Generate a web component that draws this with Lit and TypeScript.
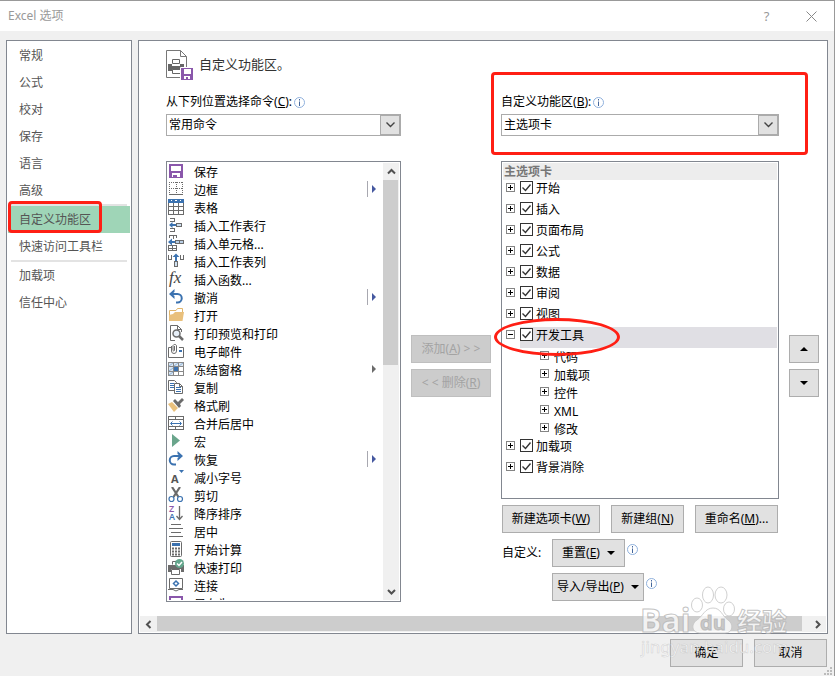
import { LitElement, html, css, svg, nothing } from "lit";
import { customElement, property } from "lit/decorators.js";

const G = "#6b6b6b";
const B = "#3b72b0";
const P = "#8a57ab";

const floppy = svg`<g shape-rendering="crispEdges"><path fill="${P}" fill-rule="evenodd" d="M1 1h14v14H1zM3 3v5h10V3zM4 10v4h1v-2h4v2h3v-4z"/></g>`;

const glyphs: Record<string, unknown> = {
  save: floppy,
  border: svg`<g fill="none" stroke="${G}" shape-rendering="crispEdges"><path stroke-dasharray="1 1" d="M1 1.5h14M1 7.5h14M1.5 1v12M8.5 1v12M14.5 1v12"/><path d="M1 13.5h14"/></g>`,
  table: svg`<g shape-rendering="crispEdges"><path fill="${B}" d="M0 0h16v4H0z"/><path fill="#fff" d="M3 1h1v1h-1zM7 1h2v1h-2zM12 1h1v1h-1z"/><path fill="none" stroke="${G}" d="M.5 4v11.500h15V4M0 7.500h16M0 11.500h16M5.500 4v12M10.500 4v12"/></g>`,
  insRow: svg`<g shape-rendering="crispEdges"><path fill="none" stroke="${G}" d="M2 1.500h4.500v3H2M2 11.500h4.500v3H2"/><path fill="#cfe0f0" stroke="${G}" d="M8.500 6.500h5v3h-5z"/></g><path fill="${B}" d="M1 8l3.500-3v2H8v2H4.500v2z"/>`,
  insCell: svg`<g shape-rendering="crispEdges"><path fill="none" stroke="${G}" d="M1.500 3V.5h7V3M5 .5v3M.5 10.500h8v5h-8zM4.500 10.500v5M.5 13h8"/><path fill="#b9cfe6" stroke="${G}" d="M7.500 5.500h8v3h-8zM11.500 5.500v3"/></g><path fill="${B}" d="M0 7l4-3.500V6h3v2H4v2.500z"/>`,
  insCol: svg`<g shape-rendering="crispEdges"><path fill="none" stroke="${G}" d="M.5 2v4.500h3V2M12.500 2v4.500h3V2"/><path fill="#cfe0f0" stroke="${G}" d="M6.500 8.500h3v5h-3z"/></g><path fill="${B}" d="M8 .5l3.500 3.500H9v4H7V4H4.500z"/>`,
  fx: svg`<text x="1" y="12" font-family="Liberation Serif, serif" font-style="italic" font-size="17" fill="#444">fx</text>`,
  undo: svg`<path fill="none" stroke="${B}" stroke-width="2" d="M3 5h6.500a4 4 0 0 1 0 8.500H8"/><path fill="${B}" d="M6.500 0L1 5l5.500 5V7L4 5l2.500-2z"/>`,
  open: svg`<path fill="#fff" stroke="#e0b56b" d="M1.500 13V3.500H8L9.500 1.500h5V6"/><path fill="#e9c07c" d="M1 14V8l4-1 2-2h9l-1.500 9z"/>`,
  preview: svg`<path fill="none" stroke="${G}" stroke-width="1" d="M7 15.500H2.500V.5h7l4 4V7M9.500 .5v4h4"/><circle cx="8.500" cy="8.500" r="3.500" fill="#e6eef7" stroke="${G}" stroke-width="1.500"/><path stroke="${G}" stroke-width="2.500" d="M11 11l4 4"/>`,
  mail: svg`<path fill="none" stroke="${G}" d="M3 4.500H.5v10h15v-10H11"/><path fill="none" stroke="${G}" d="M3.500 3v5a2.500 2.500 0 0 0 5 0V2.500a2 2 0 0 0-3.500 0V7.500a1 1 0 0 0 1.500 0V3"/><path fill="${B}" d="M11 7h3v2h-3z"/>`,
  freeze: svg`<g shape-rendering="crispEdges"><path fill="#dbe7f3" d="M0 1h16v5H0zM0 6h5v9H0z"/><path fill="none" stroke="#888" d="M.5 1.500h15v13H.5zM0 5.500h16M0 10.500h16M5.500 1v14M10.500 1v14"/><path fill="${B}" d="M6 6h4v4H6z"/></g><path stroke="#8fb2d6" d="M1 5l4-3M6 5l4-3M11 5l4-3M1 10l4-3M1 14l4-3"/>`,
  copy: svg`<path fill="#fff" stroke="${G}" d="M.5 1.500h6l2 2v8h-8z"/><path stroke="${B}" d="M2 4.500h4M2 6.500h4M2 8.500h4"/><path fill="#fff" stroke="${G}" d="M6.500 4.500h5l3 3v7h-8zM11.500 4.500v3h3"/><path stroke="${B}" d="M8 8.500h5M8 10.500h5M8 12.500h5"/>`,
  brush: svg`<path fill="#e9c07c" d="M0 7l4-2 6 6-4 4z"/><path fill="${G}" d="M5 4l2-2 3 3 4-4 2 2-4 4 1 2-2 2z"/>`,
  merge: svg`<g fill="none" shape-rendering="crispEdges"><path stroke="${G}" d="M.5 1.500h15v13H.5zM0 4.500h16M0 11.500h16M7.500 1v3M7.500 12v3"/><path stroke="${B}" d="M3 8.500h10"/></g><path fill="none" stroke="${B}" d="M4.500 6.500L2.500 8.500 4.500 10.500M11.500 6.500L13.500 8.500 11.500 10.500"/>`,
  macro: svg`<path fill="#6aa58c" d="M4 1l8 6.500L4 14z"/>`,
  redo: svg`<path fill="none" stroke="${B}" stroke-width="2" d="M13 5H6a4 4 0 0 0 0 8.500h2"/><path fill="${B}" d="M9.500 0L15 5l-5.500 5V7L12 5 9.500 3z"/>`,
  shrink: svg`<text x="3" y="14" font-family="Open Sans, sans-serif" font-weight="700" font-size="11" fill="#555">A</text><path fill="${B}" d="M11 1h5L13.500 4z"/>`,
  cut: svg`<path stroke="${G}" stroke-width="2.200" d="M4 0l6.500 10M12 0L5.500 10"/><circle cx="3.500" cy="12" r="2.500" fill="#fff" stroke="${B}" stroke-width="1.200"/><circle cx="12" cy="12" r="2.500" fill="#fff" stroke="${B}" stroke-width="1.200"/>`,
  sort: svg`<g font-family="Open Sans, sans-serif" font-size="9" font-weight="600"><text x="1" y="7" fill="${P}">Z</text><text x="1" y="15" fill="${B}">A</text></g><path fill="none" stroke="${G}" stroke-width="1.300" d="M11.500 1v13M8.500 11l3 3.500 3-3.500"/>`,
  center: svg`<path stroke="${G}" shape-rendering="crispEdges" d="M3 1.500h10M1 5.500h14M3 9.500h10M1 13.500h14"/>`,
  calc: svg`<rect x="2.500" y=".5" width="11" height="15" rx="1" fill="#fff" stroke="${G}"/><path fill="${B}" d="M4 2h8v3H4z"/><path stroke="${G}" stroke-width="2" stroke-dasharray="2 1" d="M4 7.500h8M4 10.500h8M4 13.500h8"/>`,
  print: svg`<path fill="${G}" d="M0 6h16v7h-3v-3H3v3H0z"/><path fill="#fff" stroke="${G}" d="M3.500 10.500h8v5h-8zM4.500 5.500v-3H9"/><circle cx="11.500" cy="4.500" r="4.500" fill="#62a68c"/><path fill="none" stroke="#fff" stroke-width="1.500" d="M9 4.500l2 2 3-3.500"/>`,
  link: svg`<path fill="#fff" stroke="${G}" d="M1.500 1.500h13v10h-13z"/><path fill="none" stroke="${G}" d="M0 12.500h5q3 3 6 0h4"/><path fill="none" stroke="${B}" stroke-width="1.500" d="M8 4l2.500 2.500L8 9 5.500 6.500z"/>`,
  close: floppy,
};

const commands: { icon: string; text: string; more?: "split" | "menu" }[] = [
  { icon: "save", text: "保存" },
  { icon: "border", text: "边框", more: "split" },
  { icon: "table", text: "表格" },
  { icon: "insRow", text: "插入工作表行" },
  { icon: "insCell", text: "插入单元格..." },
  { icon: "insCol", text: "插入工作表列" },
  { icon: "fx", text: "插入函数..." },
  { icon: "undo", text: "撤消", more: "split" },
  { icon: "open", text: "打开" },
  { icon: "preview", text: "打印预览和打印" },
  { icon: "mail", text: "电子邮件" },
  { icon: "freeze", text: "冻结窗格", more: "menu" },
  { icon: "copy", text: "复制" },
  { icon: "brush", text: "格式刷" },
  { icon: "merge", text: "合并后居中" },
  { icon: "macro", text: "宏" },
  { icon: "redo", text: "恢复", more: "split" },
  { icon: "shrink", text: "减小字号" },
  { icon: "cut", text: "剪切" },
  { icon: "sort", text: "降序排序" },
  { icon: "center", text: "居中" },
  { icon: "calc", text: "开始计算" },
  { icon: "print", text: "快速打印" },
  { icon: "link", text: "连接" },
  { icon: "close", text: "另存为" },
];

const tabs: { text: string; children?: string[] }[] = [
  { text: "开始" },
  { text: "插入" },
  { text: "页面布局" },
  { text: "公式" },
  { text: "数据" },
  { text: "审阅" },
  { text: "视图" },
  { text: "开发工具", children: ["代码", "加载项", "控件", "XML", "修改"] },
  { text: "加载项" },
  { text: "背景消除" },
];

const navGroups = [
  ["常规", "公式", "校对", "保存", "语言", "高级"],
  ["自定义功能区", "快速访问工具栏"],
  ["加载项", "信任中心"],
];
const currentPage = "自定义功能区";

const base = css`
  * {
    box-sizing: border-box;
  }
  button,
  select,
  input {
    font: inherit;
    color: inherit;
    margin: 0;
    padding: 0;
    border: 0;
    border-radius: 0;
    background: none;
  }
  ul {
    list-style: none;
    margin: 0;
    padding: 0;
  }
  svg {
    display: block;
    flex: none;
  }
`;

const infoIcon = html`<svg class="info" width="11" height="11" viewBox="0 0 11 11" aria-hidden="true">
  <circle cx="5.500" cy="5.500" r="5" fill="#fff" stroke="#8fb0dc" />
  <path fill="#44679c" d="M5 2h1v1.500H5zM5 4.500h1V9H5z" />
</svg>`;

const chevron = (d: string) => html`<svg width="9" height="9" viewBox="0 0 9 9" aria-hidden="true">
  <path fill="none" stroke="#505050" stroke-width="2" d=${d} />
</svg>`;

@customElement("combo-field")
class ComboField extends LitElement {
  @property() label = "";
  @property() key = "";
  @property() value = "";

  static styles = [
    base,
    css`
      :host {
        display: block;
      }
      .label {
        display: flex;
        align-items: center;
        gap: 2px;
        height: 16px;
        margin-bottom: 4px;
        white-space: nowrap;
      }
      .combo {
        display: grid;
        grid-template-columns: minmax(0, 1fr) 20px;
        height: 22px;
        border: 1px solid #ababab;
        background: #fff;
      }
      .select {
        grid-area: 1 / 1 / 2 / 3;
        appearance: none;
        padding-left: 2px;
      }
      .drop {
        grid-area: 1 / 2;
        display: grid;
        place-items: center;
        border: 1px solid #ababab;
        background: #e1e1e1;
        pointer-events: none;
      }
    `,
  ];

  render() {
    return html`
      <div class="label">
        <label for="s">${this.label}(<u>${this.key}</u>):</label>${infoIcon}
      </div>
      <div class="combo">
        <select class="select" id="s">
          <option>${this.value}</option>
        </select>
        <span class="drop">
          <svg width="9" height="6" viewBox="0 0 9 6" aria-hidden="true">
            <path fill="none" stroke="#444" stroke-width="1.400" d="M.5 .5l4 4 4-4" />
          </svg>
        </span>
      </div>
    `;
  }
}

@customElement("command-list")
class CommandList extends LitElement {
  static styles = [
    base,
    css`
      :host {
        display: flex;
        min-height: 0;
        padding: 1px;
        border: 1px solid #828790;
        background: #fff;
      }
      .items {
        flex: 1;
        min-width: 0;
        overflow: hidden;
      }
      .item {
        display: flex;
        height: 18px;
        line-height: 20px;
        white-space: nowrap;
      }
      .text {
        flex: 1;
        padding-left: 10px;
      }
      .more {
        display: flex;
        align-items: center;
        gap: 4px;
        width: 16px;
        height: 16px;
      }
      .rule {
        width: 1px;
        height: 16px;
        background: #a8a8b0;
      }
      .menu {
        justify-content: flex-end;
        padding-right: 7px;
      }
      .bar {
        display: flex;
        flex-direction: column;
        width: 16px;
        background: #f0f0f0;
      }
      .arrow {
        display: grid;
        place-items: center;
        height: 17px;
      }
      .track {
        flex: 1;
      }
      .thumb {
        height: 46%;
        width: 15px;
        background: #cdcdcd;
      }
    `,
  ];

  render() {
    return html`
      <ul class="items">
        ${commands.map(
          (c) => html`<li class="item">
            <svg width="16" height="16" viewBox="0 0 16 16" aria-hidden="true">${glyphs[c.icon]}</svg>
            <span class="text">${c.text}</span>
            ${c.more
              ? html`<span class="more ${c.more}">
                  ${c.more === "split" ? html`<span class="rule"></span>` : nothing}
                  <svg width="4" height="8" viewBox="0 0 4 8" aria-hidden="true">
                    <path fill=${c.more === "split" ? "#4659a0" : "#6b6b6b"} d="M0 0l4 4-4 4z" />
                  </svg>
                </span>`
              : nothing}
          </li>`
        )}
      </ul>
      <div class="bar">
        <span class="arrow">${chevron("M1 6.500L4.500 3 8 6.500")}</span>
        <div class="track"><div class="thumb"></div></div>
        <span class="arrow">${chevron("M1 3l3.500 3.500L8 3")}</span>
      </div>
    `;
  }
}

@customElement("tab-tree")
class TabTree extends LitElement {
  static styles = [
    base,
    css`
      :host {
        display: block;
        padding: 1px;
        border: 1px solid #828790;
        background: #fff;
      }
      .head {
        height: 17px;
        padding-left: 1px;
        background: #ededed;
        color: #777;
        font-weight: 700;
        line-height: 17px;
      }
      .row {
        position: relative;
        display: flex;
        height: 21px;
        padding-left: 3px;
      }
      .expander {
        width: 9px;
        height: 9px;
        margin: 3px 5px 0 0;
      }
      .tab {
        flex: 1;
        display: flex;
        padding-top: 1px;
        line-height: 16px;
      }
      .current {
        background: #e0dfe4;
      }
      .check {
        display: grid;
        width: 13px;
        height: 13px;
        margin-right: 3px;
      }
      .box {
        grid-area: 1 / 1;
        appearance: none;
        width: 13px;
        height: 13px;
        border: 1px solid #333;
        background: #fff;
      }
      .tick {
        grid-area: 1 / 1;
        pointer-events: none;
      }
      .child {
        display: flex;
        height: 18px;
        padding-left: 37px;
        line-height: 20px;
      }
      .ring {
        position: absolute;
        left: -9px;
        top: -9px;
        width: 126px;
        height: 38px;
        border: 3px solid #ff1f14;
        border-radius: 50%;
        z-index: 1;
        pointer-events: none;
      }
    `,
  ];

  private expander(open: boolean) {
    return html`<svg class="expander" width="9" height="9" viewBox="0 0 9 9" shape-rendering="crispEdges" aria-hidden="true">
      <path fill="#fff" stroke="#848484" d="M.5 .5h8v8h-8z" />
      <path stroke="#000" d=${open ? "M2 4.500h5" : "M2 4.500h5M4.500 2v5"} />
    </svg>`;
  }

  render() {
    return html`
      <div class="head">主选项卡</div>
      ${tabs.map(
        (t) => html`
          <div class="row">
            ${this.expander(!!t.children)}
            <label class="tab ${t.children ? "current" : ""}">
              <span class="check">
                <input class="box" type="checkbox" checked />
                <svg class="tick" width="13" height="13" viewBox="0 0 13 13" aria-hidden="true">
                  <path fill="none" stroke="#333" stroke-width="1.400" d="M2.500 6.500l3 3 5-6" />
                </svg>
              </span>
              ${t.text}
            </label>
            ${t.children ? html`<span class="ring"></span>` : nothing}
          </div>
          ${t.children?.map((c) => html`<div class="child">${this.expander(false)}${c}</div>`)}
        `
      )}
    `;
  }
}

@customElement("app-root")
class AppRoot extends LitElement {
  static styles = [
    base,
    css`
      :host {
        position: relative;
        display: flex;
        flex-direction: column;
        box-sizing: border-box;
        height: 100vh;
        min-height: 640px;
        overflow: hidden;
        border: 0 solid #999;
        border-width: 1px 1px 0 0;
        background: #f0f0f0;
        color: #000;
        font: 12px/16px "Noto Sans", "Noto Sans CJK SC", sans-serif;
      }
      .title {
        display: flex;
        align-items: center;
        height: 30px;
        padding: 0 17px 0 8px;
        background: #fff;
        color: #999;
      }
      .caption {
        flex: 1;
      }
      .tool {
        display: grid;
        place-items: center;
        width: 11px;
        height: 16px;
        margin-left: 34px;
      }
      .help {
        font-size: 13px;
      }
      .body {
        flex: 1;
        display: flex;
        gap: 6px;
        min-height: 0;
        padding: 9px 6px 0;
      }
      .nav {
        flex: none;
        width: 126px;
        padding: 1px;
        border: 1px solid #828790;
        background: #fff;
      }
      .split {
        height: 2px;
        margin: 0 3px;
        border: 0;
        background: #e3e3e3;
      }
      .link {
        position: relative;
        display: block;
        width: 100%;
        height: 27px;
        padding-left: 11px;
        color: #555;
        text-align: left;
      }
      .active {
        background: #9fd5b7;
      }
      .mark {
        position: absolute;
        border: 3px solid #ff1f14;
        border-radius: 4px;
        pointer-events: none;
      }
      .mark-nav {
        left: 0;
        top: -5px;
        width: 94px;
        height: 32px;
      }
      .mark-field {
        left: -10px;
        right: -29px;
        top: -22px;
        height: 83px;
      }
      .page {
        flex: 1;
        min-width: 0;
        display: flex;
        flex-direction: column;
        padding: 0 1px 1px;
        border: 1px solid #828790;
        background: #fff;
      }
      .heading {
        display: flex;
        gap: 6px;
        height: 30px;
        margin: 9px 26px 14px;
        color: #333;
        font-size: 13px;
        font-weight: 400;
        line-height: 28px;
      }
      .grid {
        flex: 1;
        min-height: 0;
        display: grid;
        grid-template-columns: minmax(0, 235fr) 80px minmax(0, 278fr) 30px;
        grid-template-rows: auto minmax(0, 1fr);
        gap: 25px 10px;
        padding: 0 7px 14px 26px;
      }
      .left {
        grid-area: 1 / 1;
      }
      .right {
        position: relative;
        grid-area: 1 / 3;
      }
      .commands {
        grid-area: 2 / 1;
      }
      .stack {
        grid-row: 2;
        display: flex;
        flex-direction: column;
        justify-content: center;
        gap: 6px;
        padding-bottom: 31px;
      }
      .custom {
        grid-area: 2 / 3;
        display: flex;
        flex-direction: column;
        gap: 6px;
        padding-bottom: 1px;
      }
      .tree {
        flex: 1;
      }
      .line {
        display: flex;
        justify-content: space-between;
        padding: 0 1px;
      }
      .reset {
        display: grid;
        grid-template-columns: 50px auto;
        justify-content: start;
        gap: 6px 0;
        padding-left: 1px;
        align-items: center;
      }
      .with-info {
        grid-column: 2;
        display: flex;
        gap: 2px;
      }
      .with-info .info {
        margin-top: 5px;
      }
      .btn {
        display: flex;
        align-items: center;
        justify-content: center;
        gap: 7px;
        height: 28px;
        border: 1px solid #adadad;
        background: #e1e1e1;
        white-space: nowrap;
      }
      .btn:disabled {
        border-color: #bfbfbf;
        background: #ccc;
        color: #a3a3a3;
      }
      .w73 {
        width: 73px;
      }
      .w83 {
        width: 83px;
      }
      .w92 {
        width: 92px;
      }
      .w98 {
        width: 98px;
      }
      .hbar {
        display: flex;
        height: 16px;
        background: #f0f0f0;
      }
      .harrow {
        display: grid;
        place-items: center;
        width: 17px;
      }
      .htrack {
        flex: 1;
      }
      .hthumb {
        width: 99%;
        height: 15px;
        background: #cdcdcd;
      }
      .foot {
        display: flex;
        justify-content: flex-end;
        gap: 11px;
        padding: 5px 7px 9px;
      }
      .grip {
        position: absolute;
        right: 1px;
        bottom: 0;
      }
      .watermark {
        position: absolute;
        right: 38px;
        bottom: 16px;
        pointer-events: none;
      }
    `,
  ];

  render() {
    return html`
      <header class="title">
        <span class="caption">Excel 选项</span>
        <button class="tool help" aria-label="帮助">?</button>
        <button class="tool" aria-label="关闭">
          <svg width="11" height="11" viewBox="0 0 11 11"><path stroke="#888" d="M.5 .5l10 10M10.500 .5l-10 10" /></svg>
        </button>
      </header>
      <div class="body">
        <nav class="nav">
          ${navGroups.map(
            (g, i) => html`
              ${i ? html`<hr class="split" />` : nothing}
              ${g.map(
                (n) => html`<button class="link ${n === currentPage ? "active" : ""}">
                  ${n}${n === currentPage ? html`<span class="mark mark-nav"></span>` : nothing}
                </button>`
              )}
            `
          )}
        </nav>
        <main class="page">
          <h1 class="heading">
            <svg width="27" height="30" viewBox="0 0 27 30" aria-hidden="true">
              <path fill="#fff" stroke="#777" d="M.5 .5h14l6 6v21H.5zM14.500 .5v6h6" />
              <path fill="#666" d="M2 14h4v2h8v-2h4v7H2z" />
              <path fill="#fff" stroke="#666" d="M6.500 9.500h7v4h-7zM6.500 19.500h8v4h-8z" />
              <path fill="#8a57ab" stroke="#fff" d="M14.500 17.500h13v13h-13z" />
              <path fill="#fff" d="M18 19h7v5h-7zM18 26h6v3h-2v-2h-2v2h-2z" />
            </svg>
            自定义功能区。
          </h1>
          <div class="grid">
            <combo-field class="left" label="从下列位置选择命令" key="C" value="常用命令"></combo-field>
            <div class="right">
              <combo-field label="自定义功能区" key="B" value="主选项卡"></combo-field>
              <span class="mark mark-field"></span>
            </div>
            <command-list class="commands"></command-list>
            <div class="stack">
              <button class="btn" disabled><span>添加(<u>A</u>) &gt; &gt;</span></button>
              <button class="btn" disabled><span>&lt; &lt; 删除(<u>R</u>)</span></button>
            </div>
            <div class="custom">
              <tab-tree class="tree"></tab-tree>
              <div class="line">
                <button class="btn w98"><span>新建选项卡(<u>W</u>)</span></button>
                <button class="btn w73"><span>新建组(<u>N</u>)</span></button>
                <button class="btn w83"><span>重命名(<u>M</u>)...</span></button>
              </div>
              <div class="reset">
                <span>自定义:</span>
                <div class="with-info">
                  <button class="btn w73"><span>重置(<u>E</u>)</span>${this.caret("M0 0h8L4 4z")}</button>
                  ${infoIcon}
                </div>
                <div class="with-info">
                  <button class="btn w92"><span>导入/导出(<u>P</u>)</span>${this.caret("M0 0h8L4 4z")}</button>
                  ${infoIcon}
                </div>
              </div>
            </div>
            <div class="stack">
              <button class="btn" aria-label="上移">${this.caret("M0 4h8L4 0z")}</button>
              <button class="btn" aria-label="下移">${this.caret("M0 0h8L4 4z")}</button>
            </div>
          </div>
          <div class="hbar">
            <span class="harrow">${chevron("M6.500 1L3 4.500 6.500 8")}</span>
            <div class="htrack"><div class="hthumb"></div></div>
            <span class="harrow">${chevron("M3 1l3.500 3.500L3 8")}</span>
          </div>
        </main>
      </div>
      <footer class="foot">
        <button class="btn w73">确定</button>
        <button class="btn w73">取消</button>
      </footer>
      <svg class="grip" width="9" height="9" viewBox="0 0 9 9" aria-hidden="true">
        <path fill="#bbb" d="M6 0h2v2H6zM3 3h2v2H3zM6 3h2v2H6zM0 6h2v2H0zM3 6h2v2H3zM6 6h2v2H6z" />
      </svg>
      <svg class="watermark" width="156" height="76" viewBox="0 0 156 76" aria-hidden="true">
        <g fill="#fff" fill-opacity=".75" stroke="#c4c4c4" stroke-opacity=".8">
          <ellipse cx="68" cy="11" rx="5.500" ry="8" />
          <ellipse cx="81" cy="11" rx="6" ry="8" />
          <ellipse cx="57" cy="21" rx="5.500" ry="7" />
          <ellipse cx="89" cy="25" rx="5.500" ry="7" />
          <path d="M73 24c8 0 9 8 15 12s5 13-3 13H61c-10 0-10-9-4-13s8-12 16-12z" />
        </g>
        <g font-family="Open Sans, sans-serif" font-weight="700" fill="#fff" fill-opacity=".75" stroke="#b4b4b4" stroke-opacity=".8">
          <text x="0" y="48" font-size="32">Bai</text>
          <text x="60" y="46" font-size="20" fill="#bbb">du</text>
          <text x="97" y="47" font-size="25" font-family="Noto Sans CJK SC, sans-serif">经验</text>
        </g>
        <text x="1" y="69" font-family="Noto Sans, sans-serif" font-size="17" fill="#fff" fill-opacity=".75" stroke="#bbb" stroke-opacity=".6" stroke-width=".6">jingyan.baidu.com</text>
      </svg>
    `;
  }

  private caret(d: string) {
    return html`<svg width="8" height="4" viewBox="0 0 8 4" aria-hidden="true"><path fill="#000" d=${d} /></svg>`;
  }
}
